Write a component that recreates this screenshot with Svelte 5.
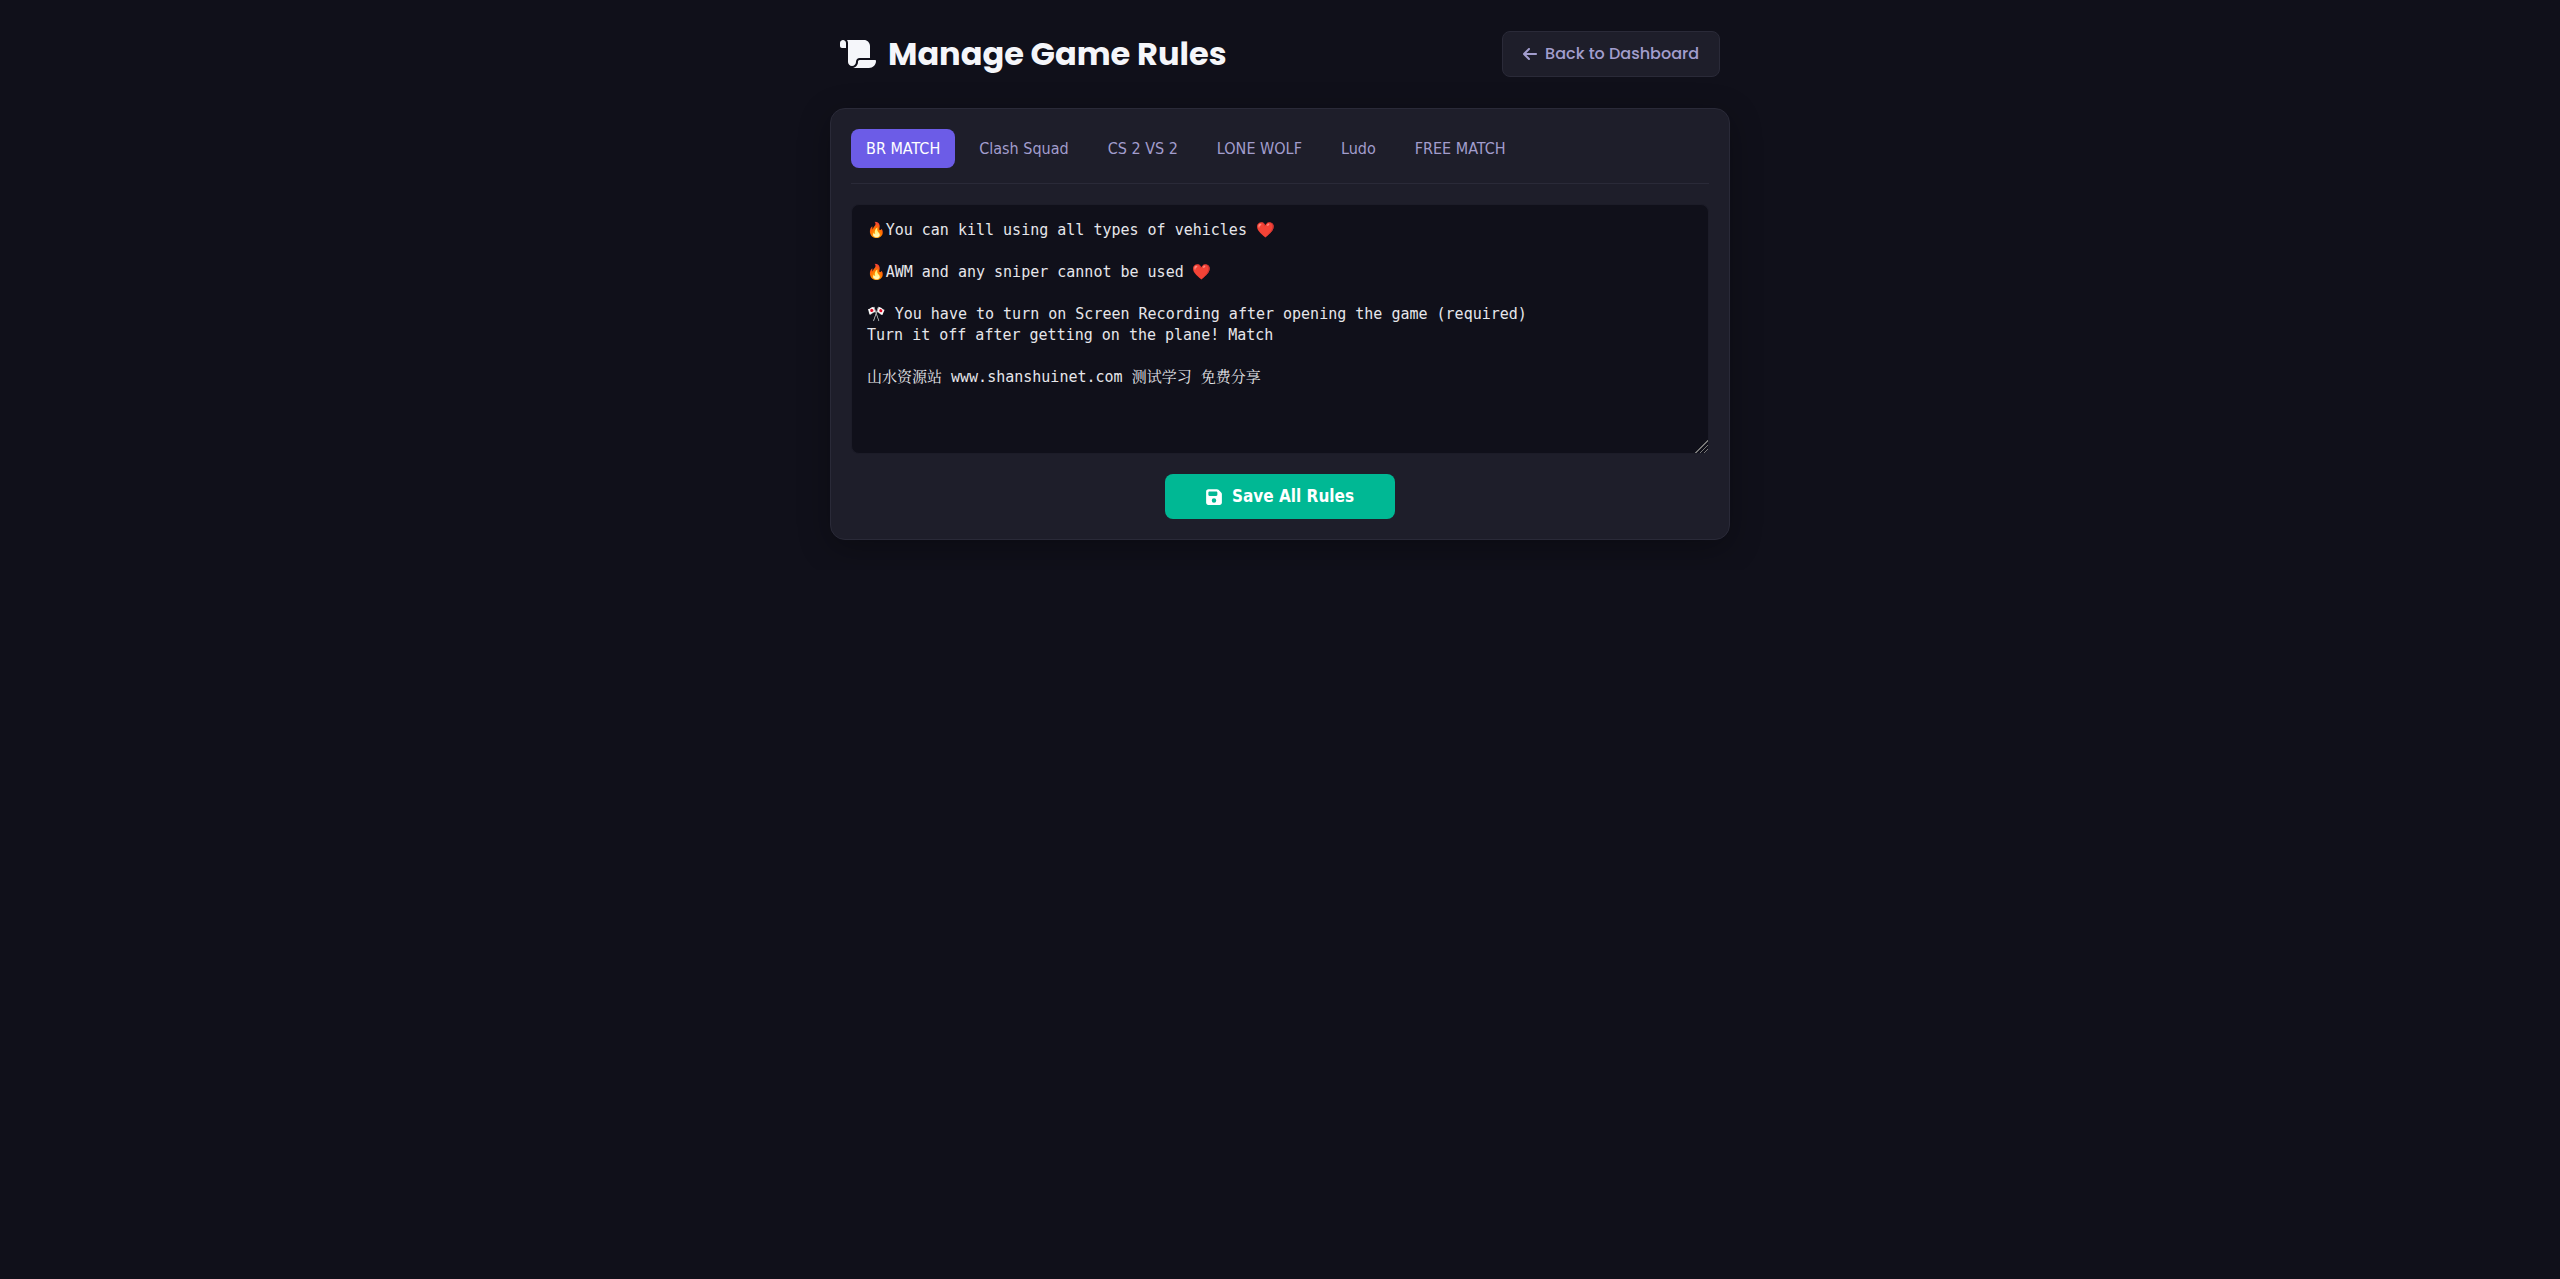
<script>
  const fire = '\u{1F525}';
  const heart = '\u2764\uFE0F';
  const flags = '\u{1F38C}';

  const categories = ['BR MATCH', 'Clash Squad', 'CS 2 VS 2', 'LONE WOLF', 'Ludo', 'FREE MATCH'];

  let active = $state(0);
  let rules = $state([
    [
      `${fire}You can kill using all types of vehicles ${heart}`,
      '',
      `${fire}AWM and any sniper cannot be used ${heart}`,
      '',
      `${flags} You have to turn on Screen Recording after opening the game (required)`,
      'Turn it off after getting on the plane! Match',
      '',
      '山水资源站 www.shanshuinet.com 测试学习 免费分享'
    ].join('\n'),
    '', '', '', '', ''
  ]);
</script>

<main class="page">
  <header class="header">
    <h1>
      <svg class="scroll" viewBox="0 0 576 512" aria-hidden="true">
        <path d="M0 80v48c0 17.700 14.300 32 32 32H96V80c0-26.500-21.500-48-48-48S0 53.500 0 80zM112 32c10 13.400 16 30 16 48V384c0 35.300 28.700 64 64 64s64-28.700 64-64v-5.300c0-32.400 26.300-58.700 58.700-58.700H480V128c0-53-43-96-96-96H112zM464 480c61.900 0 112-50.100 112-112c0-8.800-7.200-16-16-16H314.700c-14.700 0-26.700 11.900-26.700 26.700V384c0 53-43 96-96 96H464z" />
      </svg>
      <span>Manage Game Rules</span>
    </h1>
    <a class="back" href="#dashboard">
      <svg class="arrow" viewBox="0 0 448 512" aria-hidden="true">
        <path d="M9.400 233.400c-12.500 12.500-12.500 32.800 0 45.300l160 160c12.500 12.500 32.800 12.500 45.300 0s12.500-32.800 0-45.300L109.200 288 416 288c17.700 0 32-14.300 32-32s-14.300-32-32-32l-306.700 0L214.600 118.600c12.500-12.500 12.500-32.800 0-45.300s-32.800-12.500-45.300 0l-160 160z" />
      </svg>
      <span>Back to Dashboard</span>
    </a>
  </header>

  <form class="card" onsubmit={(e) => e.preventDefault()}>
    <div class="tabs" role="tablist">
      {#each categories as name, i}
        <button type="button" role="tab" class="tab" class:active={active === i} aria-selected={active === i} onclick={() => (active = i)}>{name}</button>
      {/each}
    </div>

    <textarea aria-label={`${categories[active]} rules`} spellcheck="false" bind:value={rules[active]}></textarea>

    <button type="submit" class="save">
      <svg class="disk" viewBox="0 0 448 512" aria-hidden="true">
        <path fill-rule="evenodd" d="M64 32C28.700 32 0 60.700 0 96V416c0 35.300 28.700 64 64 64H384c35.300 0 64-28.700 64-64V173.300c0-17-6.700-33.300-18.700-45.300L352 50.700C340 38.700 323.700 32 306.700 32H64zm0 96c0-17.700 14.300-32 32-32H288c17.700 0 32 14.300 32 32v64c0 17.700-14.300 32-32 32H96c-17.700 0-32-14.300-32-32V128zM224 288a64 64 0 1 1 0 128 64 64 0 1 1 0-128z" />
      </svg>
      <span>Save All Rules</span>
    </button>
  </form>
</main>

<style>
  :global(body) {
    background: #10101a;
  }

  .page {
    box-sizing: border-box;
    max-width: 940px;
    margin: 0 auto;
    padding: 30px 20px;
    color: #f5f6fa;
    font-family: Poppins, Inter, sans-serif;
  }

  .header {
    display: flex;
    align-items: center;
    justify-content: space-between;
    flex-wrap: wrap;
    gap: 16px;
    padding: 0 10px;
    margin-bottom: 30px;
  }

  h1 {
    display: flex;
    align-items: center;
    gap: 12px;
    margin: 0;
    font-size: 32px;
    line-height: 48px;
    font-weight: 700;
  }

  svg {
    fill: currentColor;
    flex: none;
  }

  .scroll {
    width: 36px;
    height: 32px;
  }

  .back {
    display: flex;
    align-items: center;
    gap: 8px;
    padding: 10px 20px;
    border: 1px solid #2a2a38;
    border-radius: 8px;
    background: #1e1e2a;
    color: #a29dcd;
    font-size: 16px;
    line-height: 24px;
    font-weight: 500;
    text-decoration: none;
  }

  .arrow {
    width: 14px;
    height: 16px;
  }

  .disk {
    width: 16px;
    height: 18px;
  }

  .card {
    padding: 20px;
    border: 1px solid #2a2a38;
    border-radius: 15px;
    background: #1e1e2a;
    box-shadow: 0 8px 32px rgba(0, 0, 0, 0.3);
  }

  .tabs {
    display: flex;
    flex-wrap: wrap;
    gap: 9px;
    padding-bottom: 15px;
    margin-bottom: 20px;
    border-bottom: 1px solid #2a2a38;
  }

  button {
    border: 0;
    border-radius: 8px;
    font-family: Tahoma, 'DejaVu Sans Condensed', 'DejaVu Sans', sans-serif;
    font-size: 16px;
    line-height: 19px;
    cursor: pointer;
  }

  .tab {
    padding: 10px 15px;
    background: transparent;
    color: #a29dcd;
  }

  .tab.active {
    background: #6c5ce7;
    color: #fff;
  }

  textarea {
    display: block;
    box-sizing: border-box;
    width: 100%;
    height: 250px;
    padding: 15px;
    border: 1px solid #1c1c28;
    border-radius: 8px;
    outline: 0;
    resize: vertical;
    background: #10101a;
    color: #e6e6ea;
    font-family: Consolas, 'DejaVu Sans Mono', 'Noto Color Emoji', 'Noto Serif CJK SC', 'Noto Sans CJK SC', monospace;
    font-size: 15px;
    line-height: 21px;
  }

  textarea::-webkit-resizer {
    background: linear-gradient(135deg, #10101a 50%, transparent 50%),
      repeating-linear-gradient(135deg, #777 0 1px, transparent 1px 3px);
  }

  .save {
    display: flex;
    align-items: center;
    justify-content: center;
    gap: 10px;
    width: 230px;
    max-width: 100%;
    margin: 20px auto 0;
    padding: 12px 0;
    background: #00b894;
    color: #fff;
    font-size: 17px;
    line-height: 21px;
    font-weight: 700;
  }
</style>
